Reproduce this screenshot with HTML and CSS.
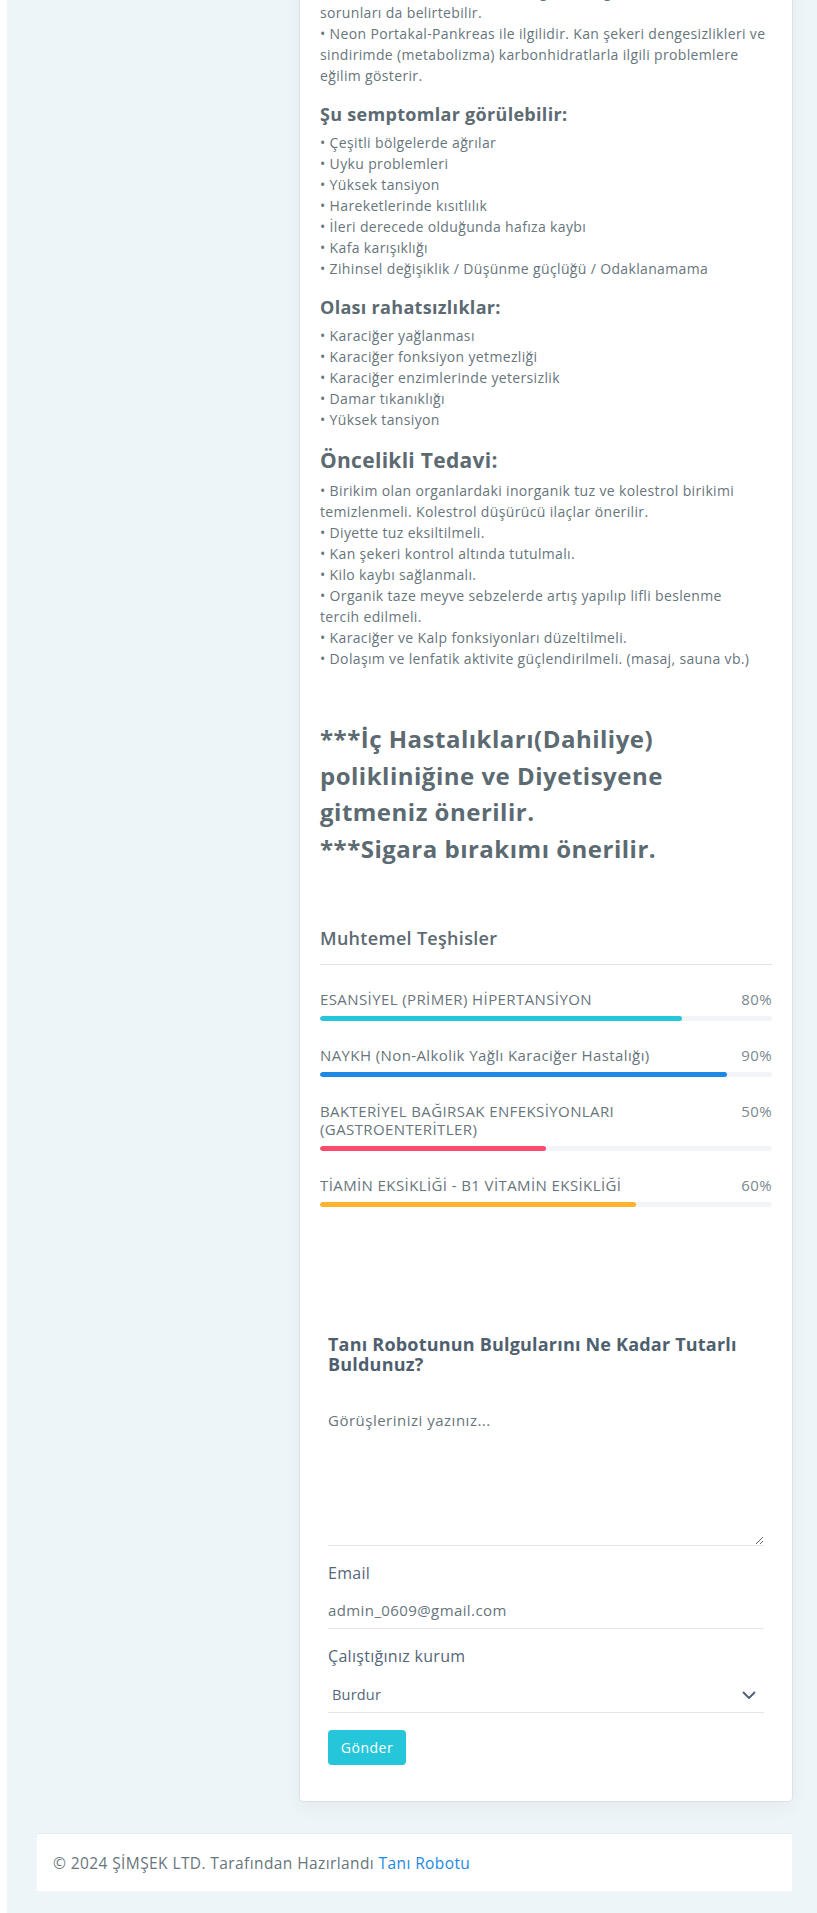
FILE: index.html
```html
<!DOCTYPE html>
<html lang="tr">
<head>
<meta charset="utf-8">
<title>Tanı Robotu</title>
<link rel="stylesheet" href="styles.css">
</head>
<body>
<div class="page">
  <div class="layout">
    <div class="side"></div>
    <main class="card">
      <div class="card-body">
        <p class="txt">• Mor Mavi-Sindirim sistemi ile ilgilidir. Bağırsak ve mide<br>sorunları da belirtebilir.<br>• Neon Portakal-Pankreas ile ilgilidir. Kan şekeri dengesizlikleri ve sindirimde (metabolizma) karbonhidratlarla ilgili problemlere eğilim gösterir.</p>

        <h4 class="sec-title">Şu semptomlar görülebilir:</h4>
        <ul class="bullets">
          <li>Çeşitli bölgelerde ağrılar</li>
          <li>Uyku problemleri</li>
          <li>Yüksek tansiyon</li>
          <li>Hareketlerinde kısıtlılık</li>
          <li>İleri derecede olduğunda hafıza kaybı</li>
          <li>Kafa karışıklığı</li>
          <li>Zihinsel değişiklik / Düşünme güçlüğü / Odaklanamama</li>
        </ul>

        <h4 class="sec-title">Olası rahatsızlıklar:</h4>
        <ul class="bullets">
          <li>Karaciğer yağlanması</li>
          <li>Karaciğer fonksiyon yetmezliği</li>
          <li>Karaciğer enzimlerinde yetersizlik</li>
          <li>Damar tıkanıklığı</li>
          <li>Yüksek tansiyon</li>
        </ul>

        <h3 class="sec-title lg">Öncelikli Tedavi:</h3>
        <ul class="bullets">
          <li>Birikim olan organlardaki inorganik tuz ve kolestrol birikimi temizlenmeli. Kolestrol düşürücü ilaçlar önerilir.</li>
          <li>Diyette tuz eksiltilmeli.</li>
          <li>Kan şekeri kontrol altında tutulmalı.</li>
          <li>Kilo kaybı sağlanmalı.</li>
          <li>Organik taze meyve sebzelerde artış yapılıp lifli beslenme tercih&nbsp;edilmeli.</li>
          <li>Karaciğer ve Kalp fonksiyonları düzeltilmeli.</li>
          <li>Dolaşım ve lenfatik aktivite güçlendirilmeli. (masaj, sauna vb.)</li>
        </ul>

        <h2 class="advice">***İç Hastalıkları(Dahiliye)<br>polikliniğine ve Diyetisyene<br>gitmeniz önerilir.<br>***Sigara bırakımı önerilir.</h2>

        <h5 class="dx-title">Muhtemel Teşhisler</h5>
        <div class="dx-list">
          <div class="dx">
            <div class="dx-head"><span class="dx-name">ESANSİYEL (PRİMER) HİPERTANSİYON</span><span class="dx-pct">80%</span></div>
            <div class="track"><div class="fill cyan" style="width:80%"></div></div>
          </div>
          <div class="dx">
            <div class="dx-head"><span class="dx-name">NAYKH (Non-Alkolik Yağlı Karaciğer Hastalığı)</span><span class="dx-pct">90%</span></div>
            <div class="track"><div class="fill blue" style="width:90%"></div></div>
          </div>
          <div class="dx">
            <div class="dx-head"><span class="dx-name">BAKTERİYEL BAĞIRSAK ENFEKSİYONLARI (GASTROENTERİTLER)</span><span class="dx-pct">50%</span></div>
            <div class="track"><div class="fill red" style="width:50%"></div></div>
          </div>
          <div class="dx">
            <div class="dx-head"><span class="dx-name">TİAMİN EKSİKLİĞİ - B1 VİTAMİN EKSİKLİĞİ</span><span class="dx-pct">60%</span></div>
            <div class="track"><div class="fill orange" style="width:70%"></div></div>
          </div>
        </div>

        <form class="feedback">
          <h4 class="fb-title">Tanı Robotunun Bulgularını Ne Kadar Tutarlı Buldunuz?</h4>
          <textarea class="fb-text" placeholder="Görüşlerinizi yazınız..."></textarea>
          <label class="fb-label" for="email">Email</label>
          <input class="fb-input" id="email" type="email" value="admin_0609@gmail.com">
          <label class="fb-label" for="kurum">Çalıştığınız kurum</label>
          <div class="select-wrap">
            <select class="fb-select" id="kurum">
              <option>Burdur</option>
            </select>
            <svg class="chevron" width="14" height="9" viewBox="0 0 14 9" aria-hidden="true"><path d="M1.5 1.5 L7 7 L12.5 1.5" fill="none" stroke="#4f5d73" stroke-width="1.8" stroke-linecap="round" stroke-linejoin="round"/></svg>
          </div>
          <button class="btn" type="button">Gönder</button>
        </form>
      </div>
    </main>
  </div>
  <footer class="footer">© 2024 ŞİMŞEK LTD. Tarafından Hazırlandı&nbsp;<a href="#" class="link">Tanı Robotu</a></footer>
</div>
</body>
</html>
```

FILE: styles.css
```css
html, body {
  margin: 0;
  padding: 0;
}
body {
  background: #ffffff;
  font-family: "Open Sans", "Liberation Sans", sans-serif;
  color: #67757c;
  overflow: hidden;
}
.page {
  margin-left: 7px;
  min-height: 1913px;
  box-sizing: border-box;
  background: #eef5f9;
  padding: 0 25px 23px 30px;
}
.layout {
  display: grid;
  grid-template-columns: 248px 1fr;
  column-gap: 15px;
  margin-bottom: 32px;
}
.card {
  background: #ffffff;
  border-radius: 4px;
  margin-top: -39px;
  box-shadow: 0 0 0 1px rgba(30, 60, 90, 0.07), 0 6px 18px rgba(30, 60, 90, 0.06);
}
.card-body {
  padding: 20px 20px 20px;
}
.txt,
.bullets {
  margin: 0;
  font-size: 14px;
  line-height: 21px;
  letter-spacing: 0.35px;
}
.bullets {
  list-style: none;
  padding: 0;
}
.bullets li::before {
  content: "• ";
}
.sec-title {
  margin: 17px 0 7px;
  font-size: 18px;
  line-height: 22px;
  font-weight: 700;
  letter-spacing: 0.3px;
  color: #5c6a72;
}
.sec-title.lg {
  font-size: 21px;
  line-height: 26px;
}
.advice {
  margin: 52px 0 0;
  font-size: 24px;
  line-height: 36.5px;
  font-weight: 700;
  letter-spacing: 0.5px;
  color: #5c6a72;
}
.dx-title {
  margin: 59px 0 0;
  padding-bottom: 14px;
  border-bottom: 1px solid #dfe3e7;
  font-size: 18px;
  line-height: 24px;
  font-weight: 600;
  letter-spacing: 0.3px;
  color: #5c6a72;
}
.dx-list {
  padding-top: 25px;
}
.dx + .dx {
  margin-top: 25px;
}
.dx-head {
  display: flex;
  justify-content: space-between;
  gap: 20px;
  font-size: 15px;
  line-height: 18px;
  letter-spacing: 0.4px;
}
.dx-pct {
  color: #7b878e;
}
.track {
  margin-top: 8px;
  height: 5px;
  background: #f2f4f8;
  border-radius: 3px;
  overflow: hidden;
}
.fill {
  height: 100%;
  border-radius: 3px;
}
.cyan { background: #26c6da; }
.blue { background: #1e88e5; }
.red { background: #fc4b6c; }
.orange { background: #ffb22b; }

.feedback {
  margin: 127px 0 0;
  padding: 0 8px 16px;
}
.fb-title {
  margin: 0;
  font-size: 18px;
  line-height: 20px;
  font-weight: 700;
  letter-spacing: 0.2px;
  color: #4f5f6f;
}
.fb-text {
  display: block;
  box-sizing: border-box;
  width: 100%;
  height: 140px;
  margin-top: 32px;
  padding: 4px 0;
  border: 0;
  border-bottom: 1px solid #e3e7eb;
  background: transparent;
  font-family: inherit;
  font-size: 15px;
  line-height: 21px;
  letter-spacing: 0.5px;
  color: #67757c;
  resize: vertical;
  outline: none;
}
.fb-text::placeholder {
  color: #67757c;
  opacity: 1;
}
.fb-label {
  display: block;
  margin-top: 16px;
  font-size: 16px;
  line-height: 22px;
  letter-spacing: 0.3px;
  color: #54667a;
}
.fb-input {
  display: block;
  box-sizing: border-box;
  width: 100%;
  height: 37px;
  margin-top: 8px;
  padding: 0;
  border: 0;
  border-bottom: 1px solid #e3e7eb;
  background: transparent;
  font-family: inherit;
  font-size: 15px;
  letter-spacing: 0.4px;
  color: #67757c;
  outline: none;
}
.select-wrap {
  position: relative;
  margin-top: 9px;
}
.fb-select {
  display: block;
  box-sizing: border-box;
  width: 100%;
  height: 37px;
  padding: 0 30px 0 4px;
  border: 0;
  border-bottom: 1px solid #e3e7eb;
  border-radius: 0;
  background: transparent;
  font-family: inherit;
  font-size: 14.5px;
  letter-spacing: 0.2px;
  color: #54667a;
  appearance: none;
  -webkit-appearance: none;
  outline: none;
}
.chevron {
  position: absolute;
  right: 8px;
  top: 15px;
  pointer-events: none;
}
.btn {
  display: block;
  margin-top: 17px;
  width: 78px;
  height: 35px;
  padding: 0;
  border: 0;
  border-radius: 4px;
  background: #26c6da;
  color: #ffffff;
  font-family: inherit;
  font-size: 14px;
  letter-spacing: 0.5px;
  cursor: pointer;
}
.footer {
  display: flex;
  align-items: center;
  box-sizing: border-box;
  height: 58px;
  padding: 0 16px;
  background: #ffffff;
  border-top: 1px solid #e6ebef;
  font-size: 15.5px;
  letter-spacing: 0.4px;
  color: #67757c;
}
.link {
  color: #1e88e5;
  text-decoration: none;
}
```
